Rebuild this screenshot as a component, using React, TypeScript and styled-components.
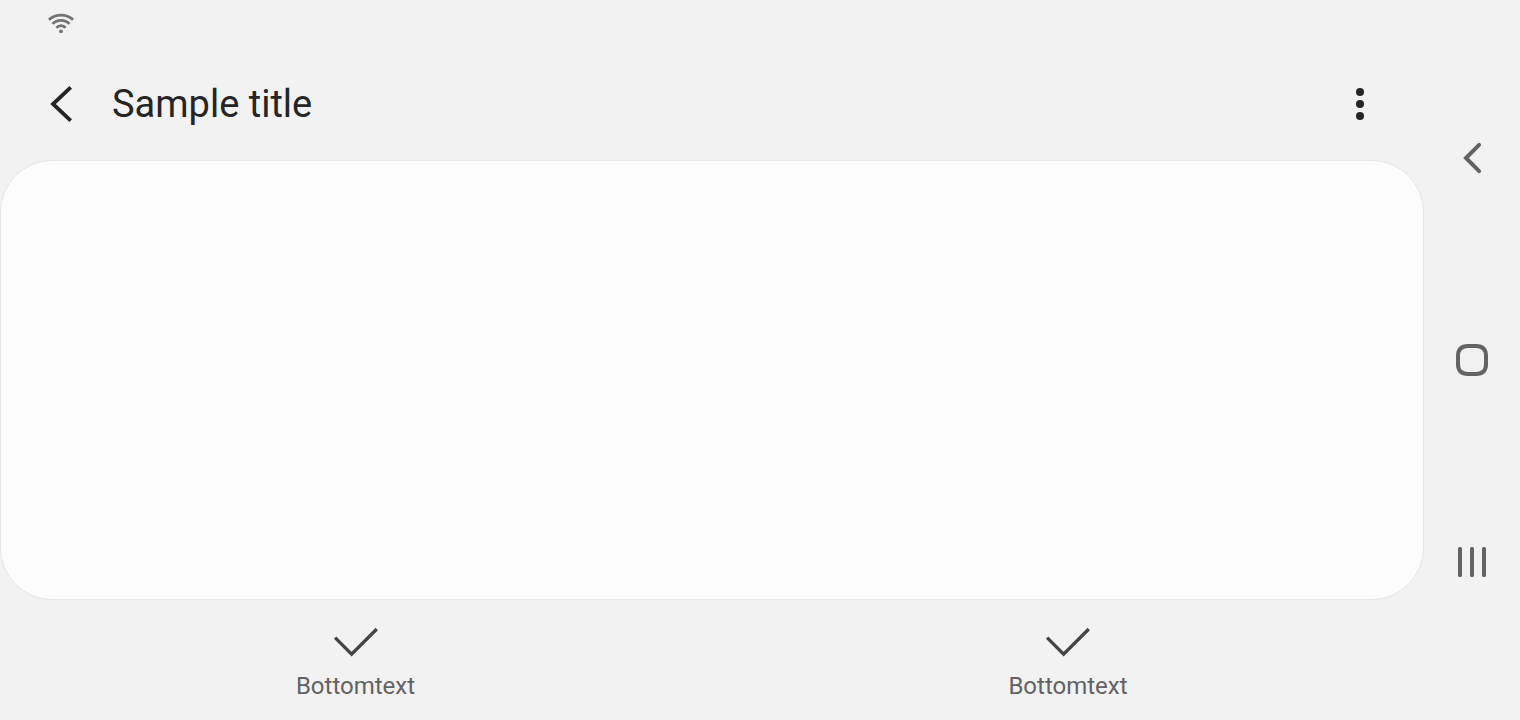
import React from 'react';
import styled, { createGlobalStyle } from 'styled-components';

const GlobalStyle = createGlobalStyle`
  * { box-sizing: border-box; }
  body { margin: 0; background: #f2f2f2; overflow: hidden; }
`;

const Screen = styled.div`
  display: flex;
  width: 1520px;
  height: 720px;
  background: #f2f2f2;
  font-family: Roboto, sans-serif;
`;

const Main = styled.div`
  display: flex;
  flex-direction: column;
  width: 1424px;
`;

const StatusBar = styled.div`
  height: 48px;
  padding: 13px 0 0 47px;
  svg { display: block; }
`;

const Toolbar = styled.header`
  display: flex;
  align-items: center;
  height: 112px;
  padding: 0 48px;
`;

const IconButton = styled.button<{ $width: number }>`
  display: flex;
  width: ${(p) => p.$width}px;
  padding: 0;
  border: 0;
  background: none;
`;

const Title = styled.h1`
  flex: 1;
  margin: 0;
  font-size: 38px;
  font-weight: 400;
  line-height: 48px;
  color: #252525;
`;

const Panel = styled.main`
  height: 440px;
  border: 1px solid #e6e6e6;
  border-radius: 52px;
  background: #fcfcfc;
`;

const BottomBar = styled.nav`
  display: flex;
  height: 120px;
`;

const Tab = styled.button`
  display: flex;
  flex: 1;
  flex-direction: column;
  align-items: center;
  gap: 12px;
  padding: 26px 0 0;
  border: 0;
  background: none;
  font: 400 24px/32px Roboto, sans-serif;
  color: #636363;
`;

const TabLabel = styled.span`
  ${Tab}:first-child & { margin-right: 1px; }
`;

const SystemNav = styled.aside`
  display: flex;
  flex-direction: column;
  align-items: center;
  gap: 162px;
  width: 96px;
  padding-top: 138px;
`;

const NavButton = styled(IconButton)`
  height: 40px;
`;

const tabs = ['Bottomtext', 'Bottomtext'];

export default function App() {
  return (
    <Screen>
      <GlobalStyle />
      <Main>
        <StatusBar>
          <svg width="28" height="22" viewBox="0 0 28 22" fill="none" stroke="#737373" strokeWidth="2.8">
            <path d="M1.9 6.8A18 18 0 0 1 26.1 6.8M5.5 10.9A11.8 11.8 0 0 1 22.5 10.9M9.4 14.7A6.2 6.2 0 0 1 18.6 14.7" />
            <circle cx="14" cy="18.3" r="1.9" fill="#737373" stroke="none" />
          </svg>
        </StatusBar>
        <Toolbar>
          <IconButton $width={64} aria-label="Back">
            <svg width="26" height="40" viewBox="0 0 26 40" fill="none" stroke="#252525" strokeWidth="3.8">
              <path d="M22.7 3.4L5 20L22.7 36.6" />
            </svg>
          </IconButton>
          <Title>Sample title</Title>
          <IconButton $width={32} aria-label="More options">
            <svg width="32" height="40" viewBox="0 0 32 40" fill="#252525">
              <circle cx="16" cy="8" r="4" /><circle cx="16" cy="20" r="4" /><circle cx="16" cy="32" r="4" />
            </svg>
          </IconButton>
        </Toolbar>
        <Panel />
        <BottomBar>
          {tabs.map((label, index) => (
            <Tab key={index}>
              <svg width="48" height="32" viewBox="0 0 48 32" fill="none" stroke="#454545" strokeWidth="3.3">
                <path d="M3.1 11.7L19.6 28.2L44.8 3" />
              </svg>
              <TabLabel>{label}</TabLabel>
            </Tab>
          ))}
        </BottomBar>
      </Main>
      <SystemNav>
        <NavButton $width={40} aria-label="System back">
          <svg width="40" height="40" viewBox="0 0 40 40" fill="none" stroke="#636363" strokeWidth="4" strokeLinecap="round">
            <path d="M27.1 6.9L14 20L27.1 33.1" />
          </svg>
        </NavButton>
        <NavButton $width={40} aria-label="Home">
          <svg width="40" height="40" viewBox="0 0 40 40" fill="none" stroke="#636363" strokeWidth="4">
            <path d="M16 6H24C30.5 6 34 9.5 34 16V24C34 30.5 30.5 34 24 34H16C9.5 34 6 30.5 6 24V16C6 9.5 9.5 6 16 6Z" />
          </svg>
        </NavButton>
        <NavButton $width={40} aria-label="Recents">
          <svg width="40" height="40" viewBox="0 0 40 40" fill="#636363">
            <rect x="6" y="5" width="4" height="30" rx="1.6" />
            <rect x="18" y="5" width="4" height="30" rx="1.6" />
            <rect x="30" y="5" width="4" height="30" rx="1.6" />
          </svg>
        </NavButton>
      </SystemNav>
    </Screen>
  );
}
